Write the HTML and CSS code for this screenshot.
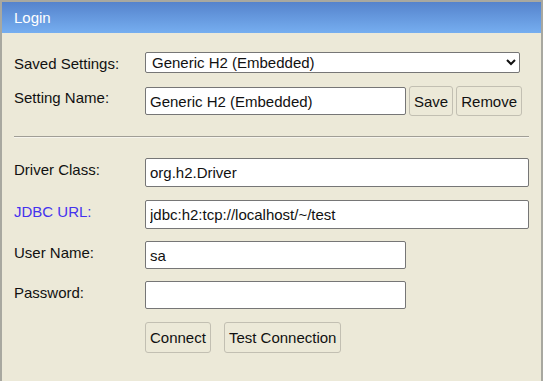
FILE: index.html
```html
<!doctype html>
<html lang="en">
  <head>
    <meta charset="UTF-8" />
    <title>H2 Console - Login</title>
    <link rel="stylesheet" href="styles.css">
  </head>
  <body>
    <div class="login">
      <div class="login-title">Login</div>
      <form class="login-body">
        <!-- Saved settings -->
        <div class="row row-saved">
          <label class="row-label" for="setting">Saved Settings:</label>
          <select class="field field-select" id="setting">
            <option>Generic H2 (Embedded)</option>
            <option>Generic H2 (Server)</option>
          </select>
        </div>
        <div class="row row-name">
          <label class="row-label" for="name">Setting Name:</label>
          <input class="field field-short" id="name" type="text" value="Generic H2 (Embedded)" />
          <button type="button" class="btn btn-save">Save</button>
          <button type="button" class="btn">Remove</button>
        </div>

        <hr class="divider" />

        <!-- Connection -->
        <div class="row row-first">
          <label class="row-label" for="driver">Driver Class:</label>
          <input class="field field-wide" id="driver" type="text" value="org.h2.Driver" />
        </div>
        <div class="row">
          <label class="row-label link" for="url">JDBC URL:</label>
          <input class="field field-wide" id="url" type="text" value="jdbc:h2:tcp://localhost/~/test" />
        </div>
        <div class="row row-user">
          <label class="row-label" for="user">User Name:</label>
          <input class="field field-short field-low" id="user" type="text" value="sa" />
        </div>
        <div class="row row-user">
          <label class="row-label" for="password">Password:</label>
          <input class="field field-short field-low" id="password" type="password" value="" />
        </div>
        <div class="row row-actions">
          <span class="row-label"></span>
          <button type="submit" class="btn btn-tall">Connect</button>
          <button type="button" class="btn btn-tall btn-test">Test Connection</button>
        </div>
      </form>
    </div>
  </body>
</html>
```

FILE: styles.css
```css
body {
  margin: 0;
  background: #ffffff;
  font-family: "Liberation Sans", Arial, sans-serif;
  font-size: 15px;
  color: #111;
}

.login {
  width: 539px;
  min-height: 381px;
  border: 2px solid #a8a8a0;
  border-bottom: none;
  background: #ece9d8;
}

.login-title {
  height: 31px;
  line-height: 32px;
  padding-left: 12px;
  color: #ffffff;
  font-size: 15px;
  background: linear-gradient(to bottom, #5583cc 0%, #76aef0 100%);
}

.login-body {
  margin: 0;
  padding: 19px 12px 20px 12px;
}

.row {
  display: flex;
  align-items: flex-start;
  margin-top: 13px;
}

.row-saved {
  margin-top: 0;
}

.row-name {
  align-items: center;
}

.row-first {
  margin-top: 20px;
}

.row-user {
  margin-top: 12px;
}

.row-actions {
  margin-top: 13px;
}

.row-label {
  width: 131px;
  flex-shrink: 0;
  padding-top: 3px;
  line-height: 17px;
}

.row-name .row-label {
  align-self: flex-start;
}

.link {
  color: #4432ee;
}

.field {
  box-sizing: border-box;
  height: 29px;
  padding: 0 4px;
  border: 1px solid #767676;
  border-radius: 2px;
  background: #ffffff;
  font-family: "Liberation Sans", Arial, sans-serif;
  font-size: 15px;
  color: #111;
}

.field-select {
  width: 375px;
  height: 21px;
  padding: 0 2px;
}

.field-short {
  width: 261px;
  height: 28px;
}

.field-low {
  height: 28px;
}

.field-wide {
  width: 385px;
}

.btn {
  box-sizing: border-box;
  height: 30px;
  padding: 0 4px;
  margin-left: 3px;
  border: 1px solid #c2bfb2;
  border-radius: 3px;
  background: #ece9d8;
  font-family: "Liberation Sans", Arial, sans-serif;
  font-size: 15px;
  color: #111;
}

.btn-tall {
  height: 31px;
}

.row-actions .btn {
  margin-left: 0;
}

.row-actions .btn-test {
  margin-left: 13px;
}

.divider {
  height: 0;
  margin: 20px 0 0 0;
  border: none;
  border-top: 1px solid #a09e96;
  border-bottom: 1px solid #f6f4ec;
}
```
